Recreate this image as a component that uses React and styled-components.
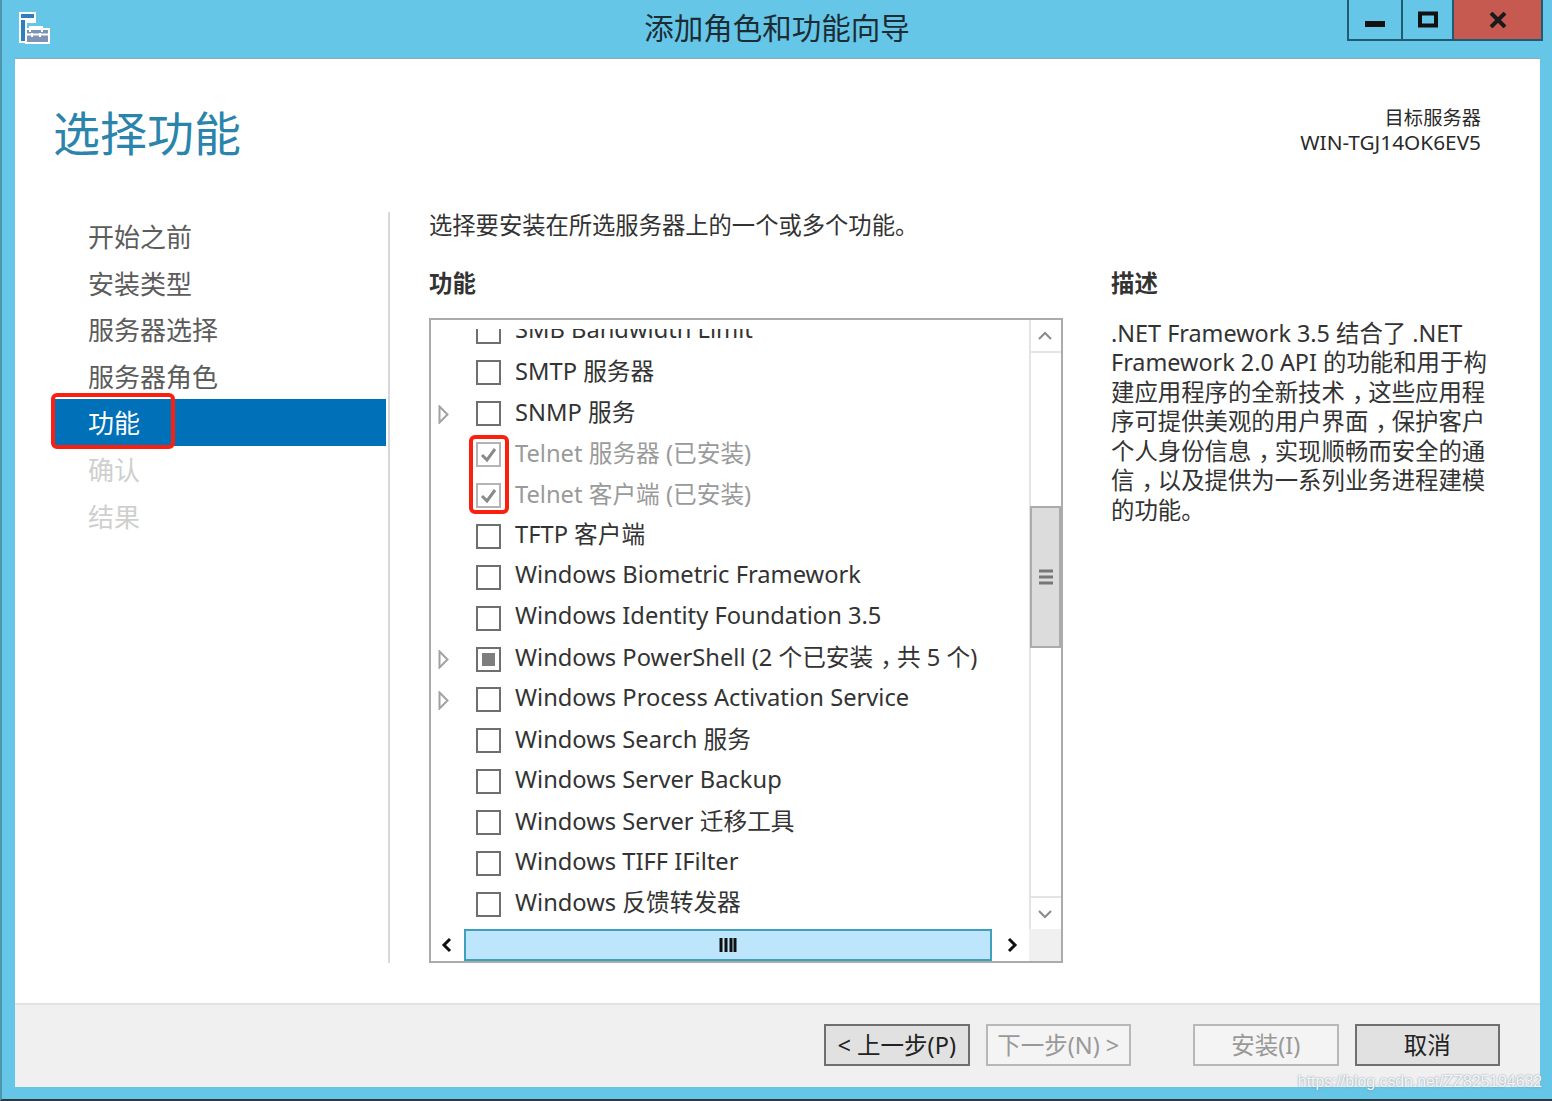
import React from 'react';
import styled, { createGlobalStyle } from 'styled-components';

const fontStack = '"Noto Sans", "Noto Sans CJK SC", "Liberation Sans", sans-serif';

const GlobalStyle = createGlobalStyle`
  html, body {
    margin: 0;
    padding: 0;
    background: #66c6e8;
  }
  * {
    box-sizing: border-box;
  }
`;

const Window = styled.div`
  background: #66c6e8;
  border-bottom: 2px solid #2b3a40;
  border-left: 2px solid #4d97ae;
  display: flex;
  flex-direction: column;
  font-family: ${fontStack};
  height: 1101px;
  overflow: hidden;
  position: relative;
  width: 1552px;
`;

const TitleBar = styled.div`
  align-items: flex-start;
  display: flex;
  flex: 0 0 58px;
  justify-content: space-between;
  position: relative;
`;

const AppIcon = styled.svg`
  height: 33px;
  margin: 11px 0 0 16px;
  width: 34px;
`;

const TitleText = styled.div`
  color: #1c2c33;
  font-size: 29.5px;
  left: 0;
  line-height: 56px;
  position: absolute;
  right: 0;
  text-align: center;
`;

const WindowButtons = styled.div`
  display: flex;
  height: 41px;
  margin-right: 9px;
`;

const WindowButton = styled.div`
  align-items: center;
  background: ${(p) => (p.$close ? '#c75a50' : 'transparent')};
  border: 2px solid #1f5c74;
  border-left-width: ${(p) => (p.$first ? '2px' : '0')};
  border-top: 0;
  display: flex;
  justify-content: center;
  padding-top: ${(p) => p.$offset || 0}px;
  width: ${(p) => p.$width}px;
`;

const Client = styled.div`
  background: #fff;
  border-top: 1px solid #8fa9b5;
  display: flex;
  flex: 0 0 1029px;
  flex-direction: column;
  margin: 0 12px 0 13px;
`;

const Header = styled.div`
  display: flex;
  flex: 0 0 153px;
  justify-content: space-between;
  padding: 40px 59px 0 38px;
`;

const PageTitle = styled.h1`
  color: #2a84ab;
  font-size: 47px;
  font-weight: 400;
  line-height: 68px;
  margin: 0;
`;

const ServerInfo = styled.div`
  color: #2a2a2a;
  line-height: 25px;
  margin-top: 6px;
  text-align: right;
`;

const ServerCaption = styled.div`
  font-size: 19.3px;
`;

const ServerName = styled.div`
  font-size: 20.8px;
`;

const Main = styled.div`
  display: flex;
  flex: 1;
  padding-bottom: 40px;
`;

const Sidebar = styled.nav`
  border-right: 2px solid #d8d8d8;
  flex: 0 0 375px;
  padding: 1px 2px 0 39px;
`;

const NavItem = styled.div`
  background: ${(p) => (p.$active ? '#0070b8' : 'transparent')};
  color: ${(p) => (p.$active ? '#fff' : p.$disabled ? '#cfcfcf' : '#5c5c5c')};
  font-size: 26px;
  height: 46.6px;
  line-height: 48px;
  padding-left: 34px;
  position: relative;
`;

const RedMark = styled.div`
  border: 4px solid #fb1f0f;
  border-radius: 6px;
  height: ${(p) => p.$h}px;
  left: ${(p) => p.$left}px;
  pointer-events: none;
  position: absolute;
  top: ${(p) => p.$top}px;
  width: ${(p) => p.$w}px;
`;

const Content = styled.div`
  display: flex;
  flex: 1;
  flex-direction: column;
  padding-left: 39px;
`;

const Intro = styled.div`
  color: #333;
  font-size: 23.3px;
  height: 28px;
  line-height: 26px;
  margin-bottom: 30px;
  white-space: nowrap;
`;

const Columns = styled.div`
  display: flex;
  flex: 1;
  gap: 48px;
`;

const FeatureColumn = styled.div`
  display: flex;
  flex: 0 0 634px;
  flex-direction: column;
`;

const DescColumn = styled.div`
  flex: 1;
`;

const Label = styled.div`
  color: #333;
  font-size: 23.4px;
  font-weight: 700;
  height: 28px;
  line-height: 26px;
  margin-bottom: 20px;
`;

const ListBox = styled.div`
  border: 2px solid #ababab;
  display: grid;
  flex: 1;
  grid-template-columns: 1fr 32px;
  grid-template-rows: 1fr 32px;
  min-height: 0;
`;

const ListPane = styled.div`
  min-height: 0;
  padding-top: 9px;
`;

const ListClip = styled.div`
  height: 100%;
  overflow: hidden;
`;

const Rows = styled.div`
  margin-top: -18.5px;
`;

const Row = styled.div`
  align-items: center;
  color: ${(p) => (p.$muted ? '#9a9a9a' : '#333')};
  display: grid;
  font-size: 23.7px;
  grid-template-columns: 45px 24px 1fr;
  height: 40.9px;
  position: relative;
  white-space: nowrap;
`;

const Expander = styled.svg`
  height: 19px;
  margin: 3px 0 0 7px;
  width: 11px;
`;

const Box = styled.div`
  align-items: center;
  border: 2px solid ${(p) => (p.$muted ? '#b4b4b4' : '#6f6f6f')};
  display: flex;
  grid-column: 2;
  height: 25px;
  justify-content: center;
  margin-top: 2px;
  width: 25px;
`;

const BoxFill = styled.div`
  background: #7d7d7d;
  height: 13px;
  width: 13px;
`;

const RowText = styled.span`
  margin: -4px 0 0 15px;
`;

const Comma = styled.span`
  letter-spacing: -0.3em;
  padding-left: 0.3em;
`;

const VScroll = styled.div`
  border-left: 2px solid #e4e4e4;
  display: flex;
  flex-direction: column;
`;

const ScrollEnd = styled.div`
  align-items: center;
  border-bottom: ${(p) => (p.$down ? '0' : '2px solid #e4e4e4')};
  border-top: ${(p) => (p.$down ? '2px solid #e4e4e4' : '0')};
  display: flex;
  flex: 0 0 33px;
  justify-content: center;
  padding-right: 3px;
`;

const ScrollGap = styled.div`
  flex: ${(p) => (p.$fill ? '1' : `0 0 ${p.$size}px`)};
`;

const VThumb = styled.div`
  align-items: center;
  background: #dcdcdc;
  border: 2px solid #ababab;
  display: flex;
  flex: 0 0 142px;
  justify-content: center;
  margin-left: -1px;
`;

const HScroll = styled.div`
  display: flex;
`;

const HEnd = styled.div`
  align-items: center;
  display: flex;
  flex: 0 0 ${(p) => p.$width}px;
  justify-content: center;
`;

const HThumb = styled.div`
  align-items: center;
  background: #bde6fd;
  border: 2px solid #3f9fbd;
  display: flex;
  flex: 1;
  justify-content: center;
`;

const Corner = styled.div`
  background: #f0f0f0;
`;

const DescText = styled.div`
  padding-top: 0.5px;
`;

const DescLine = styled.div`
  color: #333;
  font-size: 23.4px;
  height: 29.5px;
  line-height: 29.5px;
  white-space: nowrap;
`;

const Footer = styled.div`
  align-items: center;
  background: #f0f0f0;
  border-top: 2px solid #e2e2e2;
  display: flex;
  flex: 0 0 84px;
  gap: 16px;
  justify-content: flex-end;
  padding: 0 40px 2px 0;
`;

const Button = styled.div`
  background: ${(p) => (p.$disabled ? '#f4f4f4' : '#e1e1e1')};
  border: 2px solid ${(p) => (p.$disabled ? '#b8b8b8' : '#6f6f6f')};
  color: ${(p) => (p.$disabled ? '#999' : '#222')};
  font-size: 23.5px;
  height: 42px;
  line-height: 39px;
  margin-left: ${(p) => p.$gap || 0}px;
  text-align: center;
  white-space: nowrap;
  width: 145.5px;
`;

const Watermark = styled.div`
  bottom: 8px;
  color: rgba(255, 255, 255, 0.9);
  font-family: "Liberation Sans", sans-serif;
  font-size: 15.8px;
  position: absolute;
  right: 10px;
  text-shadow: 0 0 2px rgba(100, 130, 150, 0.9);
`;

const navItems = [
  { label: '开始之前' },
  { label: '安装类型' },
  { label: '服务器选择' },
  { label: '服务器角色' },
  { label: '功能', active: true },
  { label: '确认', disabled: true },
  { label: '结果', disabled: true },
];

const features = [
  { label: 'SMB Bandwidth Limit' },
  { label: 'SMTP 服务器' },
  { label: 'SNMP 服务', expand: true },
  { label: 'Telnet 服务器 (已安装)', check: true, muted: true, mark: true },
  { label: 'Telnet 客户端 (已安装)', check: true, muted: true },
  { label: 'TFTP 客户端' },
  { label: 'Windows Biometric Framework' },
  { label: 'Windows Identity Foundation 3.5' },
  { label: 'Windows PowerShell (2 个已安装，共 5 个)', expand: true, partial: true },
  { label: 'Windows Process Activation Service', expand: true },
  { label: 'Windows Search 服务' },
  { label: 'Windows Server Backup' },
  { label: 'Windows Server 迁移工具' },
  { label: 'Windows TIFF IFilter' },
  { label: 'Windows 反馈转发器' },
];

const description = [
  '.NET Framework 3.5 结合了 .NET',
  'Framework 2.0 API 的功能和用于构',
  '建应用程序的全新技术，这些应用程',
  '序可提供美观的用户界面，保护客户',
  '个人身份信息，实现顺畅而安全的通',
  '信，以及提供为一系列业务进程建模',
  '的功能。',
];

// the old UI font centres its comma in the cell, the SC face does not
const withCommas = (text) =>
  text.split('，').map((part, i) => (
    <React.Fragment key={i}>
      {i > 0 && <Comma>，</Comma>}
      {part}
    </React.Fragment>
  ));

const ServerToolIcon = () => (
  <AppIcon viewBox="0 0 34 33">
    <path d="M1 1h17v11H9v20H1z" fill="#fff" />
    <rect x="3" y="3" width="13" height="4" fill="#2f7fc0" />
    <rect x="3" y="9" width="4" height="21" fill="#2f7fc0" />
    <rect x="7" y="17" width="25" height="16" fill="#fff" />
    <rect x="9" y="19" width="21" height="12" fill="#7f93b6" />
    <path d="M12 21v-5h12v5" fill="none" stroke="#fff" strokeWidth="2" />
    <path d="M9 23.5h21" stroke="#fff" strokeWidth="2" />
    <path d="M14 22v4M22 22v4" stroke="#fff" strokeWidth="2" />
  </AppIcon>
);

const Chevron = ({ dir, color = '#8a8a8a', width = 2, size = 18 }) => {
  const paths = {
    up: 'M3 12l6-6 6 6',
    down: 'M3 6l6 6 6-6',
    left: 'M11 3l-6 6 6 6',
    right: 'M7 3l6 6-6 6',
  };
  return (
    <svg width={size} height={size} viewBox="0 0 18 18">
      <path d={paths[dir]} fill="none" stroke={color} strokeWidth={width} />
    </svg>
  );
};

const Checkbox = ({ check, partial, muted }) => (
  <Box $muted={muted}>
    {check && (
      <svg width="21" height="21" viewBox="0 0 21 21">
        <path d="M4 11l5 5 8-11" fill="none" stroke="#8a8a8a" strokeWidth="3" />
      </svg>
    )}
    {partial && <BoxFill />}
  </Box>
);

const App = () => (
  <Window>
    <GlobalStyle />
    <TitleBar>
      <ServerToolIcon />
      <TitleText>添加角色和功能向导</TitleText>
      <WindowButtons>
        <WindowButton $first $width={56} $offset={9}>
          <svg width="20" height="8" viewBox="0 0 20 8">
            <rect y="1" width="20" height="6" fill="#111" />
          </svg>
        </WindowButton>
        <WindowButton $width={51}>
          <svg width="20" height="17" viewBox="0 0 20 17">
            <rect x="2" y="2.5" width="16" height="12" fill="none" stroke="#111" strokeWidth="4" />
          </svg>
        </WindowButton>
        <WindowButton $close $width={89}>
          <svg width="18" height="16" viewBox="0 0 18 16">
            <path d="M2 1l14 14M16 1L2 15" stroke="#1a1a1a" strokeWidth="4" />
          </svg>
        </WindowButton>
      </WindowButtons>
    </TitleBar>

    <Client>
      <Header>
        <PageTitle>选择功能</PageTitle>
        <ServerInfo>
          <ServerCaption>目标服务器</ServerCaption>
          <ServerName>WIN-TGJ14OK6EV5</ServerName>
        </ServerInfo>
      </Header>

      <Main>
        <Sidebar>
          {navItems.map((item) => (
            <NavItem key={item.label} $active={item.active} $disabled={item.disabled}>
              {item.label}
              {item.active && <RedMark $left={-3} $top={-6} $w={124} $h={56} />}
            </NavItem>
          ))}
        </Sidebar>

        <Content>
          <Intro>选择要安装在所选服务器上的一个或多个功能。</Intro>
          <Columns>
            <FeatureColumn>
              <Label>功能</Label>
              <ListBox>
                <ListPane>
                  <ListClip>
                    <Rows>
                      {features.map((f) => (
                        <Row key={f.label} $muted={f.muted}>
                          {f.expand ? (
                            <Expander viewBox="0 0 11 19">
                              <path d="M1.5 1.5l8 8-8 8z" fill="#fff" stroke="#a2a2a2" strokeWidth="2" />
                            </Expander>
                          ) : (
                            <span />
                          )}
                          <Checkbox check={f.check} partial={f.partial} muted={f.muted} />
                          <RowText>{withCommas(f.label)}</RowText>
                          {f.mark && <RedMark $left={38} $top={2} $w={40} $h={79} />}
                        </Row>
                      ))}
                    </Rows>
                  </ListClip>
                </ListPane>

                <VScroll>
                  <ScrollEnd>
                    <Chevron dir="up" />
                  </ScrollEnd>
                  <ScrollGap $size={153} />
                  <VThumb>
                    <svg width="14" height="16" viewBox="0 0 14 16">
                      <path d="M0 2h14M0 8h14M0 14h14" stroke="#777" strokeWidth="3" />
                    </svg>
                  </VThumb>
                  <ScrollGap $fill />
                  <ScrollEnd $down>
                    <Chevron dir="down" />
                  </ScrollEnd>
                </VScroll>

                <HScroll>
                  <HEnd $width={33}>
                    <Chevron dir="left" color="#111" width={3} />
                  </HEnd>
                  <HThumb>
                    <svg width="18" height="14" viewBox="0 0 18 14">
                      <path d="M2 0v14M7 0v14M12 0v14M16 0v14" stroke="#111" strokeWidth="3" />
                    </svg>
                  </HThumb>
                  <HEnd $width={37}>
                    <Chevron dir="right" color="#111" width={3} />
                  </HEnd>
                </HScroll>
                <Corner />
              </ListBox>
            </FeatureColumn>

            <DescColumn>
              <Label>描述</Label>
              <DescText>
                {description.map((line) => (
                  <DescLine key={line}>{withCommas(line)}</DescLine>
                ))}
              </DescText>
            </DescColumn>
          </Columns>
        </Content>
      </Main>

      <Footer>
        <Button>&lt; 上一步(P)</Button>
        <Button $disabled>下一步(N) &gt;</Button>
        <Button $disabled $gap={46}>安装(I)</Button>
        <Button>取消</Button>
      </Footer>
    </Client>

    <Watermark>https://blog.csdn.net/ZZ825194632</Watermark>
  </Window>
);

export default App;
